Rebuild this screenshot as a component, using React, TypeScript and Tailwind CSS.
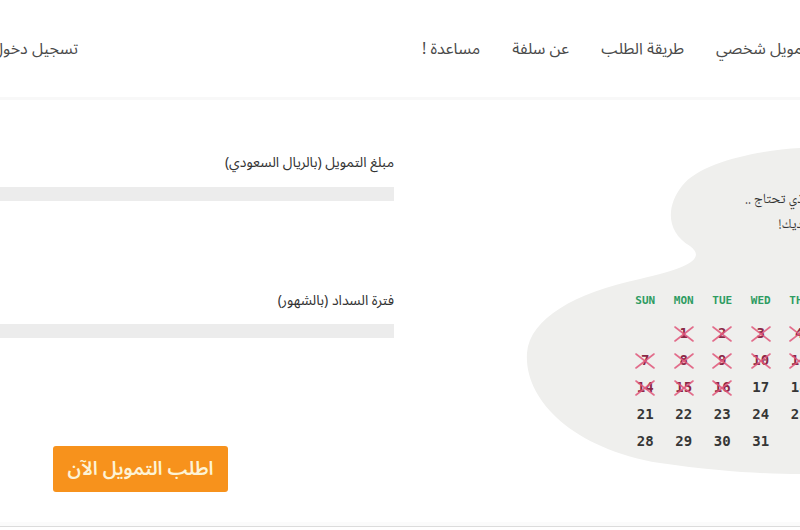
const arabic = '"Noto Sans Arabic", "DejaVu Sans", "Noto Sans", sans-serif';
const naskh = '"Noto Naskh Arabic", "DejaVu Serif", "DejaVu Sans", serif';
const mono = '"DejaVu Sans Mono", "Liberation Mono", monospace';

const navItems = ['تمويل شخصي', 'طريقة الطلب', 'عن سلفة', 'مساعدة !'];

const days = ['SUN', 'MON', 'TUE', 'WED', 'THU', 'FRI', 'SAT'];

// null = empty cell
const weeks: (number | null)[][] = [
    [null, 1, 2, 3, 4, 5, 6],
    [7, 8, 9, 10, 11, 12, 13],
    [14, 15, 16, 17, 18, 19, 20],
    [21, 22, 23, 24, 25, 26, 27],
    [28, 29, 30, 31, null, null, null],
];

const crossed = new Set([1, 2, 3, 4, 5, 6, 7, 8, 9, 10, 11, 12, 13, 14, 15, 16]);

function DayCell({ day }: { day: number | null }) {
    if (day === null) return <div className="h-[27px]" />;
    const off = crossed.has(day);
    return (
        <div className="relative h-[27px] flex items-center justify-center">
            <span className={off ? 'text-[14px] font-bold text-[#8b2846]' : 'text-[14px] font-bold text-[#363636]'}>
                {day}
            </span>
            {off && (
                <svg className="absolute left-1/2 top-1/2 -translate-x-1/2 -translate-y-1/2" width="22" height="18" viewBox="0 0 22 18">
                    <line x1="2" y1="2" x2="20" y2="16" stroke="#e0567a" strokeWidth="1.6" strokeLinecap="round" opacity="0.85" />
                    <line x1="20" y1="2" x2="2" y2="16" stroke="#e0567a" strokeWidth="1.6" strokeLinecap="round" opacity="0.85" />
                </svg>
            )}
        </div>
    );
}

export default function App() {
    return (
        <div dir="rtl" className="w-[800px] h-[530px] overflow-hidden bg-white flex flex-col" style={{ fontFamily: arabic }}>
            <header className="h-[100px] shrink-0 flex items-center justify-between border-b-[3px] border-[#f8f8f8]">
                <nav className="flex items-center gap-[32px] mr-[-8px] text-[16px] text-[#4a4a4a]">
                    {navItems.map((item) => (
                        <a key={item} className="whitespace-nowrap">{item}</a>
                    ))}
                </nav>
                <a className="ml-[-8px] whitespace-nowrap text-[16px] text-[#4a4a4a]">تسجيل دخول</a>
            </header>

            <main className="flex-1 flex justify-between">
                {/* calendar panel */}
                <section className="relative w-[273px]">
                    <svg className="absolute inset-0 overflow-visible" width="273" height="426" viewBox="527 104 273 426">
                        <path
                            d="M 800 152 C 760 154, 700 166, 682 190 C 666 210, 666 236, 690 250 C 706 262, 690 272, 640 283 C 575 297, 530 322, 527 357 C 524 402, 570 452, 660 467 C 720 476, 770 478, 800 478 L 840 478 L 840 152 Z"
                            fill="#efefed"
                        />
                    </svg>
                    <div className="relative">
                        <p className="mt-[88px] mr-[-50px] text-[14px] leading-[25px] text-[#333] whitespace-nowrap" style={{ fontFamily: naskh }}>
                            التمويل الذي تحتاج ..
                            <br />
                            الآن بين يديك!
                        </p>
                        <div dir="ltr" className="pl-[99px] mt-[53px]" style={{ fontFamily: mono }}>
                            <div className="grid grid-cols-[repeat(7,38.5px)]">
                                {days.map((d) => (
                                    <div key={d} className="h-5 flex items-center justify-center text-[11px] font-bold text-[#2e9c62]">
                                        {d}
                                    </div>
                                ))}
                            </div>
                            <div className="grid grid-cols-[repeat(7,38.5px)] mt-[9px]">
                                {weeks.flat().map((d, i) => (
                                    <DayCell key={i} day={d} />
                                ))}
                            </div>
                        </div>
                    </div>
                </section>

                {/* form */}
                <section className="w-[394px] flex flex-col pt-[53px]">
                    <label className="text-[14px] leading-5 text-[#333]">مبلغ التمويل (بالريال السعودي)</label>
                    <div className="mt-[14px] h-[14px] bg-[#ececec]" />
                    <label className="mt-[90px] text-[14px] leading-5 text-[#333]">فترة السداد (بالشهور)</label>
                    <div className="mt-[13px] h-[14px] bg-[#ececec]" />
                    <button className="self-end ml-[53px] mt-[108px] w-[175px] h-[46px] rounded-[3px] bg-[#f7921c] text-[19px] font-semibold text-[#fdf3d6]">
                        اطلب التمويل الآن
                    </button>
                </section>
            </main>

            <div className="h-[4px] bg-[#fbfbfb]" />
            <div className="h-px bg-[#dcdcdc] mb-[3px]" />
        </div>
    );
}
